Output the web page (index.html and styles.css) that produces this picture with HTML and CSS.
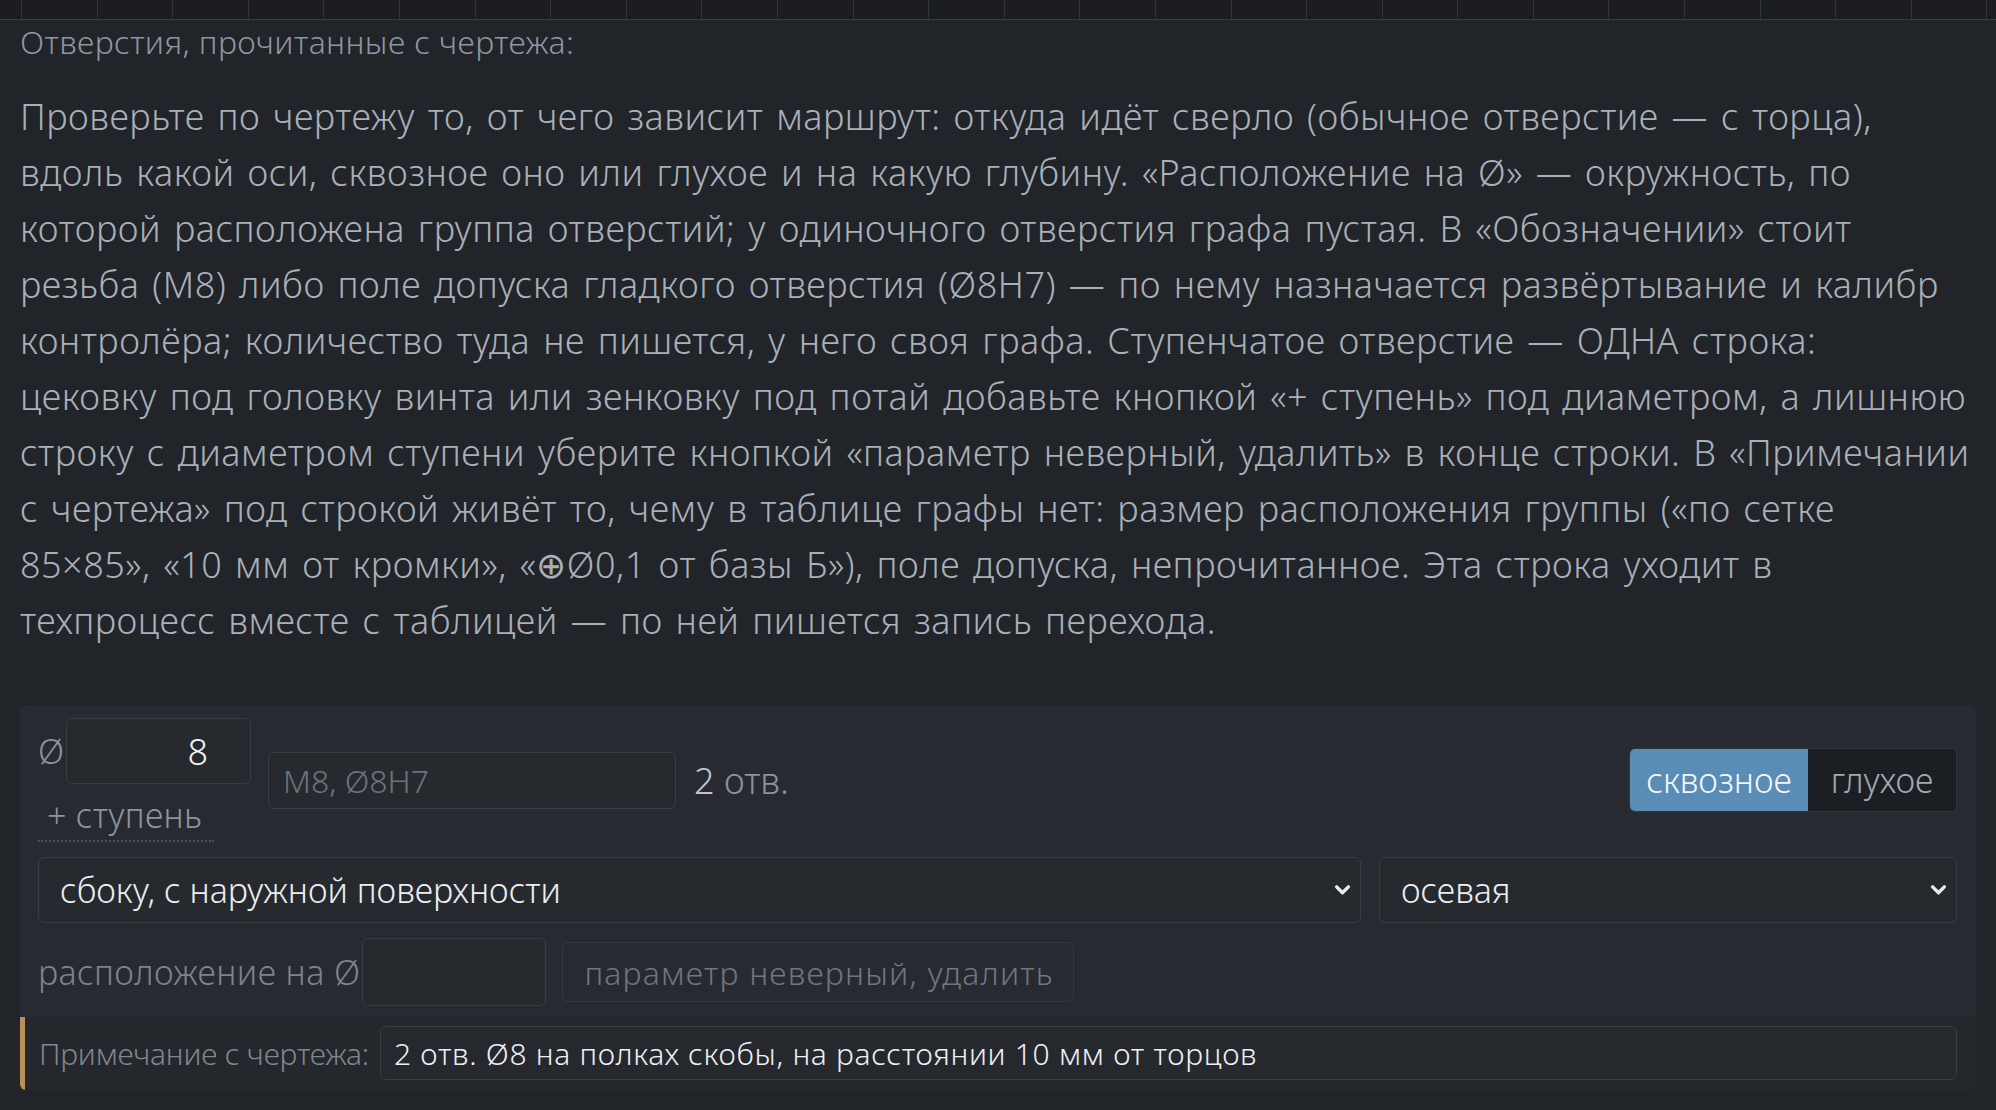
FILE: index.html
```html
<!DOCTYPE html>
<html lang="ru">
<head>
<meta charset="utf-8">
<title>Отверстия</title>
<link rel="stylesheet" href="styles.css">
</head>
<body>
<div class="strip">
  <div class="cell first"></div>
  <div class="cell"></div><div class="cell"></div><div class="cell"></div><div class="cell"></div><div class="cell"></div><div class="cell"></div><div class="cell"></div><div class="cell"></div><div class="cell"></div><div class="cell"></div><div class="cell"></div><div class="cell"></div><div class="cell"></div><div class="cell"></div><div class="cell"></div><div class="cell"></div><div class="cell"></div><div class="cell"></div><div class="cell"></div><div class="cell"></div><div class="cell"></div><div class="cell"></div><div class="cell"></div><div class="cell"></div><div class="cell"></div><div class="cell"></div><div class="cell"></div>
</div>
<main class="content">
  <h2 class="heading">Отверстия, прочитанные с чертежа:</h2>
  <p class="intro">Проверьте по чертежу то, от чего зависит маршрут: откуда идёт сверло (обычное отверстие — с торца),<br>
вдоль какой оси, сквозное оно или глухое и на какую глубину. «Расположение на Ø» — окружность, по<br>
которой расположена группа отверстий; у одиночного отверстия графа пустая. В «Обозначении» стоит<br>
резьба (М8) либо поле допуска гладкого отверстия (Ø8Н7) — по нему назначается развёртывание и калибр<br>
контролёра; количество туда не пишется, у него своя графа. Ступенчатое отверстие — ОДНА строка:<br>
цековку под головку винта или зенковку под потай добавьте кнопкой «+ ступень» под диаметром, а лишнюю<br>
строку с диаметром ступени уберите кнопкой «параметр неверный, удалить» в конце строки. В «Примечании<br>
с чертежа» под строкой живёт то, чему в таблице графы нет: размер расположения группы («по сетке<br>
85×85», «10 мм от кромки», «⊕Ø0,1 от базы Б»), поле допуска, непрочитанное. Эта строка уходит в<br>
техпроцесс вместе с таблицей — по ней пишется запись перехода.</p>

  <section class="card">
    <div class="card-body">
      <div class="row1">
        <div class="dia-group">
          <div class="dia">
            <span class="dia-sign">Ø</span>
            <input class="field dia-input" type="text" value="8">
          </div>
          <button class="step-btn" type="button">+ ступень</button>
        </div>
        <input class="field desig" type="text" placeholder="M8, Ø8H7">
        <span class="count"><span class="count-num">2</span> отв.</span>
        <div class="toggle">
          <button class="tog active" type="button">сквозное</button>
          <button class="tog" type="button">глухое</button>
        </div>
      </div>
      <div class="row2">
        <div class="select-wrap">
          <select class="field sel"><option>сбоку, с наружной поверхности</option></select>
          <svg class="chev" viewBox="0 0 16 10" width="17" height="11"><path d="M2.5 2.5 L8 8 L13.5 2.5" fill="none" stroke="currentColor" stroke-width="3.2" stroke-linecap="round" stroke-linejoin="round"/></svg>
        </div>
        <div class="select-wrap">
          <select class="field sel"><option>осевая</option></select>
          <svg class="chev" viewBox="0 0 16 10" width="17" height="11"><path d="M2.5 2.5 L8 8 L13.5 2.5" fill="none" stroke="currentColor" stroke-width="3.2" stroke-linecap="round" stroke-linejoin="round"/></svg>
        </div>
      </div>
      <div class="row3">
        <span class="pos-label">расположение на Ø</span>
        <input class="field pos-input" type="text">
        <button class="del-btn" type="button">параметр неверный, удалить</button>
      </div>
    </div>
    <div class="note">
      <span class="note-label">Примечание с чертежа:</span>
      <input class="field note-input" type="text" value="2 отв. Ø8 на полках скобы, на расстоянии 10 мм от торцов">
    </div>
  </section>
</main>
</body>
</html>
```

FILE: styles.css
```css
* { box-sizing: border-box; }
html, body { margin: 0; padding: 0; }
body {
  width: 1996px;
  height: 1110px;
  overflow: hidden;
  background: #212428;
  font-family: "Noto Sans", "DejaVu Sans", sans-serif;
  font-weight: 300;
  color: #a9b0b9;
}

.strip {
  display: flex;
  height: 20px;
  background: #1b1d21;
  border-bottom: 1px solid #3a3e44;
  overflow: hidden;
}
.strip .cell {
  flex: 0 0 75.6px;
  border-left: 1px solid #303339;
}
.strip .cell.first {
  flex-basis: 21px;
  border-left: 0;
}

.content { padding: 0 20px; }

.heading {
  margin: 0;
  font-size: 32px;
  line-height: 44px;
  font-weight: 300;
  letter-spacing: 0.4px;
  color: #8e96a0;
}

.intro {
  margin: 25px 0 0;
  font-size: 36px;
  line-height: 56px;
  letter-spacing: 0.5px;
  word-spacing: 3px;
  white-space: nowrap;
  color: #a9b0b9;
}

.card {
  margin-top: 56px;
  background: #272a30;
  border-radius: 6px;
  overflow: hidden;
}
.card-body {
  display: flex;
  flex-direction: column;
  gap: 15px;
  padding: 13px 19px 11px 18px;
}

.field {
  background: #262a2f;
  border: 1px solid #383c43;
  border-radius: 6px;
  font-family: inherit;
  font-weight: 300;
  color: #eef0f2;
  outline: none;
  margin: 0;
}
.field::placeholder { color: #6d737b; }

.row1 {
  display: flex;
  align-items: center;
}
.dia-group {
  display: flex;
  flex-direction: column;
  align-items: flex-start;
}
.dia {
  display: flex;
  align-items: center;
  gap: 7px;
}
.dia-sign {
  width: 21px;
  font-size: 34px;
  color: #8a929c;
}
.dia-input {
  width: 185px;
  height: 66px;
  font-size: 36px;
  text-align: right;
  padding: 0 42px 0 10px;
  color: #f4f5f6;
}
.step-btn {
  margin-top: 14px;
  height: 44px;
  padding: 0 12px 8px 9px;
  background: none;
  border: 0;
  border-bottom: 2px dotted #4a4f56;
  font-family: inherit;
  font-weight: 300;
  font-size: 34px;
  line-height: 34px;
  letter-spacing: 0.3px;
  color: #8d949c;
}
.desig {
  width: 408px;
  height: 57px;
  margin-left: 17px;
  padding: 0 14px;
  font-size: 32px;
}
.count {
  margin-left: 18px;
  font-size: 36px;
  color: #8b929a;
}
.count-num { color: #bfc5cc; }

.toggle {
  margin-left: auto;
  display: flex;
  height: 64px;
  border: 1px solid #33373d;
  border-radius: 6px;
  overflow: hidden;
}
.tog {
  border: 0;
  margin: 0;
  font-family: inherit;
  font-weight: 300;
  font-size: 34px;
  background: #1b1e22;
  color: #a3a9b0;
  width: 148px;
  padding: 0;
}
.tog.active {
  width: 178px;
  background: #5a8db5;
  color: #f4f6f8;
}

.row2 {
  display: grid;
  grid-template-columns: 1323px 1fr;
  gap: 18px;
}
.select-wrap { position: relative; }
.sel {
  width: 100%;
  height: 66px;
  appearance: none;
  -webkit-appearance: none;
  padding: 0 50px 0 21px;
  font-size: 34px;
  color: #eceef0;
}
.chev {
  position: absolute;
  right: 10px;
  top: 27px;
  color: #e8eaec;
  pointer-events: none;
}

.row3 {
  display: flex;
  align-items: center;
}
.pos-label {
  font-size: 34px;
  letter-spacing: 0.4px;
  color: #7d848c;
}
.pos-input {
  width: 184px;
  height: 68px;
  margin-left: 2px;
}
.del-btn {
  margin-left: 16px;
  height: 60px;
  padding: 0 19px 0 21px;
  background: transparent;
  border: 1px solid #363a40;
  border-radius: 6px;
  font-family: inherit;
  font-weight: 300;
  font-size: 32px;
  letter-spacing: 1.2px;
  color: #6f767e;
}

.note {
  display: flex;
  align-items: center;
  gap: 11px;
  padding: 9px 19px 10px 14px;
  background: #24272b;
  border-left: 5px solid #b8915a;
}
.note-label {
  font-size: 30px;
  letter-spacing: -0.2px;
  color: #7f868e;
  white-space: nowrap;
}
.note-input {
  flex: 1;
  height: 54px;
  padding: 0 13px;
  font-size: 30px;
  letter-spacing: 0.7px;
  background: #25282d;
}
```
